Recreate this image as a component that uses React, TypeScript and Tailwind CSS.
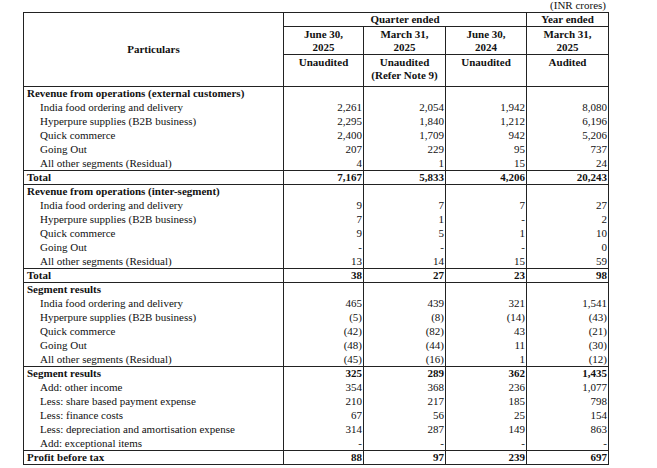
import React from 'react'

type Row = {
  label: string
  values?: string[]
  kind: 'section' | 'item' | 'total' | 'subtotal'
}

const rows: Row[] = [
  { label: 'Revenue from operations (external customers)', kind: 'section' },
  { label: 'India food ordering and delivery', values: ['2,261', '2,054', '1,942', '8,080'], kind: 'item' },
  { label: 'Hyperpure supplies (B2B business)', values: ['2,295', '1,840', '1,212', '6,196'], kind: 'item' },
  { label: 'Quick commerce', values: ['2,400', '1,709', '942', '5,206'], kind: 'item' },
  { label: 'Going Out', values: ['207', '229', '95', '737'], kind: 'item' },
  { label: 'All other segments (Residual)', values: ['4', '1', '15', '24'], kind: 'item' },
  { label: 'Total', values: ['7,167', '5,833', '4,206', '20,243'], kind: 'total' },
  { label: 'Revenue from operations (inter-segment)', kind: 'section' },
  { label: 'India food ordering and delivery', values: ['9', '7', '7', '27'], kind: 'item' },
  { label: 'Hyperpure supplies (B2B business)', values: ['7', '1', '-', '2'], kind: 'item' },
  { label: 'Quick commerce', values: ['9', '5', '1', '10'], kind: 'item' },
  { label: 'Going Out', values: ['-', '-', '-', '0'], kind: 'item' },
  { label: 'All other segments (Residual)', values: ['13', '14', '15', '59'], kind: 'item' },
  { label: 'Total', values: ['38', '27', '23', '98'], kind: 'total' },
  { label: 'Segment results', kind: 'section' },
  { label: 'India food ordering and delivery', values: ['465', '439', '321', '1,541'], kind: 'item' },
  { label: 'Hyperpure supplies (B2B business)', values: ['(5)', '(8)', '(14)', '(43)'], kind: 'item' },
  { label: 'Quick commerce', values: ['(42)', '(82)', '43', '(21)'], kind: 'item' },
  { label: 'Going Out', values: ['(48)', '(44)', '11', '(30)'], kind: 'item' },
  { label: 'All other segments (Residual)', values: ['(45)', '(16)', '1', '(12)'], kind: 'item' },
  { label: 'Segment results', values: ['325', '289', '362', '1,435'], kind: 'subtotal' },
  { label: 'Add: other income', values: ['354', '368', '236', '1,077'], kind: 'item' },
  { label: 'Less: share based payment expense', values: ['210', '217', '185', '798'], kind: 'item' },
  { label: 'Less: finance costs', values: ['67', '56', '25', '154'], kind: 'item' },
  { label: 'Less: depreciation and amortisation expense', values: ['314', '287', '149', '863'], kind: 'item' },
  { label: 'Add: exceptional items', values: ['-', '-', '-', '-'], kind: 'item' },
  { label: 'Profit before tax', values: ['88', '97', '239', '697'], kind: 'total' },
]

export default function App() {
  return (
    <div className="h-[468px] w-[657px] bg-white text-[11px] text-[#111] [font-family:'Liberation_Serif','Times_New_Roman',serif]">
      <div className="h-[12px] w-[606px] text-right leading-[11px]">(INR crores)</div>
      <table className="ml-[23px] w-[586px] table-fixed border-collapse border border-[#222] [font-family:'Liberation_Serif','Times_New_Roman',serif]">
        <colgroup>
          <col className="w-[260px]" />
          <col className="w-[80px]" />
          <col className="w-[82px]" />
          <col className="w-[81px]" />
          <col className="w-[82px]" />
        </colgroup>
        <thead>
          <tr className="h-[14px]">
            <th rowSpan={3} className="border-r border-[#222] p-0 text-center align-middle font-bold">
              Particulars
            </th>
            <th colSpan={3} className="border-r border-b border-[#222] p-0 text-center font-bold leading-[13px]">
              Quarter ended
            </th>
            <th className="border-b border-[#222] p-0 text-center font-bold leading-[13px]">Year ended</th>
          </tr>
          <tr className="h-[26px]">
            <th className="border-r border-b border-[#222] p-0 pt-px align-top font-bold leading-[13px]">
              June 30,
              <br />
              2025
            </th>
            <th className="border-r border-b border-[#222] p-0 pt-px align-top font-bold leading-[13px]">
              March 31,
              <br />
              2025
            </th>
            <th className="border-r border-b border-[#222] p-0 pt-px align-top font-bold leading-[13px]">
              June 30,
              <br />
              2024
            </th>
            <th className="border-b border-[#222] p-0 pt-px align-top font-bold leading-[13px]">
              March 31,
              <br />
              2025
            </th>
          </tr>
          <tr className="h-[32px] border-b border-[#222]">
            <th className="border-r border-[#222] p-0 pt-[1px] align-top font-bold leading-[13px]">Unaudited</th>
            <th className="border-r border-[#222] p-0 pt-[1px] align-top font-bold leading-[13px]">
              Unaudited
              <br />
              (Refer Note 9)
            </th>
            <th className="border-r border-[#222] p-0 pt-[1px] align-top font-bold leading-[13px]">Unaudited</th>
            <th className="p-0 pt-[1px] align-top font-bold leading-[13px]">Audited</th>
          </tr>
        </thead>
        <tbody>
          {rows.map((row, i) => {
            const bold = row.kind !== 'item'
            const ruled = row.kind === 'total' || row.kind === 'subtotal'
            return (
              <tr
                key={i}
                className={
                  'h-[14px] leading-[13px] ' +
                  (ruled ? 'border-t border-[#222] ' : '') +
                  (row.kind === 'total' ? 'border-b border-[#222] ' : '') +
                  (bold ? 'font-bold' : '')
                }
              >
                <td className={'border-r border-[#222] py-0 pr-0 ' + (row.kind === 'item' ? 'pl-[16px]' : 'pl-[3px]')}>
                  {row.label}
                </td>
                {[0, 1, 2, 3].map((c) => (
                  <td key={c} className="border-r border-[#222] py-0 pr-[1px] pl-0 text-right">
                    {row.values ? row.values[c] : ''}
                  </td>
                ))}
              </tr>
            )
          })}
        </tbody>
      </table>
    </div>
  )
}
